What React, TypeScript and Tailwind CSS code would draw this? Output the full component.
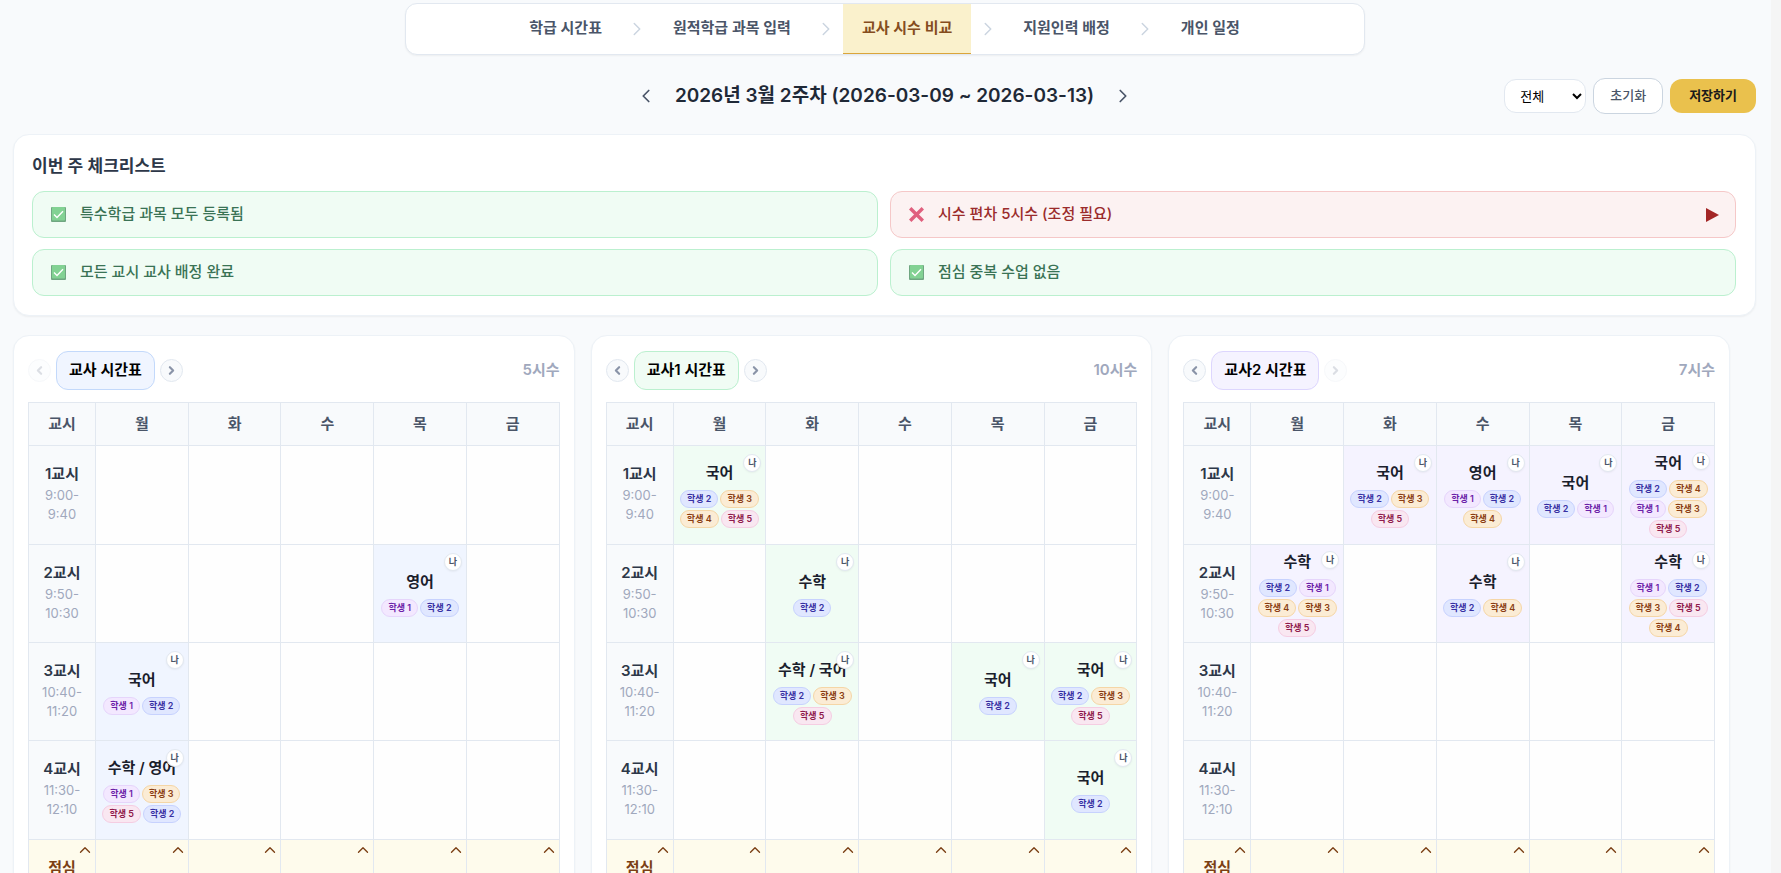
import { ChevronLeft, ChevronRight, ChevronUp } from "lucide-react";

type Lesson = { title: string; students: number[] };
type Teacher = {
    name: string;
    hours: number;
    tone: "blue" | "green" | "purple";
    lessons: Record<string, Lesson>;
};

const steps = ["학급 시간표", "원적학급 과목 입력", "교사 시수 비교", "지원인력 배정", "개인 일정"];
const days = ["월", "화", "수", "목", "금"];
const periods = [
    { label: "1교시", start: "9:00-", end: "9:40" },
    { label: "2교시", start: "9:50-", end: "10:30" },
    { label: "3교시", start: "10:40-", end: "11:20" },
    { label: "4교시", start: "11:30-", end: "12:10" },
];

const checks = [
    { text: "특수학급 과목 모두 등록됨", ok: true },
    { text: "시수 편차 5시수 (조정 필요)", ok: false },
    { text: "모든 교시 교사 배정 완료", ok: true },
    { text: "점심 중복 수업 없음", ok: true },
];

// lessons are keyed by "period-day"
const teachers: Teacher[] = [
    {
        name: "교사",
        hours: 5,
        tone: "blue",
        lessons: {
            "1-3": { title: "영어", students: [1, 2] },
            "2-0": { title: "국어", students: [1, 2] },
            "3-0": { title: "수학 / 영어", students: [1, 3, 5, 2] },
        },
    },
    {
        name: "교사1",
        hours: 10,
        tone: "green",
        lessons: {
            "0-0": { title: "국어", students: [2, 3, 4, 5] },
            "1-1": { title: "수학", students: [2] },
            "2-1": { title: "수학 / 국어", students: [2, 3, 5] },
            "2-3": { title: "국어", students: [2] },
            "2-4": { title: "국어", students: [2, 3, 5] },
            "3-4": { title: "국어", students: [2] },
        },
    },
    {
        name: "교사2",
        hours: 7,
        tone: "purple",
        lessons: {
            "0-1": { title: "국어", students: [2, 3, 5] },
            "0-2": { title: "영어", students: [1, 2, 4] },
            "0-3": { title: "국어", students: [2, 1] },
            "0-4": { title: "국어", students: [2, 4, 1, 3, 5] },
            "1-0": { title: "수학", students: [2, 1, 4, 3, 5] },
            "1-2": { title: "수학", students: [2, 4] },
            "1-4": { title: "수학", students: [1, 2, 3, 5, 4] },
        },
    },
];

const cellTone = { blue: "bg-[#f0f5ff]", green: "bg-[#f0fcf4]", purple: "bg-[#f5f3ff]" };
const nameTone = {
    blue: "bg-[#f0f5ff] border-[#c3d9fb]",
    green: "bg-[#f0fcf4] border-[#bbf0cf]",
    purple: "bg-[#f5f3ff] border-[#ddd6fe]",
};

const chipTone: Record<number, string> = {
    1: "bg-[#f3e8ff] border-[#e6d5fb] text-[#6b21a8]",
    2: "bg-[#e0e7ff] border-[#c7d2fe] text-[#3730a3]",
    3: "bg-[#fbecd5] border-[#f5d6a6] text-[#8a3d12]",
    4: "bg-[#fbecd5] border-[#f5d6a6] text-[#8a3d12]",
    5: "bg-[#f9e7f1] border-[#f5cde2] text-[#8f1a4c]",
};

function CheckIcon() {
    return (
        <svg viewBox="0 0 15 15" className="w-[15px] h-[15px] shrink-0" aria-hidden="true">
            <rect width="15" height="15" rx="1" fill="#6fa681" />
            <rect x="1" y="0" width="13" height="13.6" rx="1" fill="#82d293" />
            <path d="M3 7.6 L6 10.6 L12 4.2" fill="none" stroke="#fff" strokeWidth="1.4" />
        </svg>
    );
}

function CrossIcon() {
    return (
        <svg viewBox="0 0 15 15" className="w-[15px] h-[15px] shrink-0" aria-hidden="true">
            <path d="M1.2 1.2 L13.8 13.8 M13.8 1.2 L1.2 13.8" fill="none" stroke="#e0607e" strokeWidth="3.4" />
        </svg>
    );
}

function Steps() {
    return (
        <nav className="flex justify-center w-full max-w-[960px] mx-auto bg-white border border-[#e2e8f0] rounded-xl shadow-xs">
            {steps.map((step, i) => (
                <div key={step} className="flex">
                    {i > 0 && (
                        <span className="flex items-center justify-center w-[33px] text-[#cbd5e0]">
                            <ChevronRight size={22} strokeWidth={1.6} />
                        </span>
                    )}
                    <a
                        href="#"
                        className={
                            i === 2
                                ? "h-[50px] px-[19px] pt-3 text-[15px] leading-6 font-semibold bg-[#faf1cc] text-[#854d1e] border-b border-[#dba53a]"
                                : "h-[50px] px-[19px] pt-3 text-[15px] leading-6 font-semibold text-[#4a5568]"
                        }
                    >
                        {step}
                    </a>
                </div>
            ))}
        </nav>
    );
}

function WeekBar() {
    return (
        <div className="grid grid-cols-[1fr_auto_1fr] items-center mt-[23px] text-[#4a5568]">
            <div />
            <div className="flex items-center gap-4">
                <button aria-label="이전 주" className="p-0.5">
                    <ChevronLeft size={22} strokeWidth={1.9} />
                </button>
                <h1 className="text-[19px] leading-7 font-semibold text-[#1f2937]">2026년 3월 2주차 (2026-03-09 ~ 2026-03-13)</h1>
                <button aria-label="다음 주" className="p-0.5">
                    <ChevronRight size={22} strokeWidth={1.9} />
                </button>
            </div>
            <div className="flex items-center justify-end gap-[7px]">
                <select aria-label="보기" className="w-[82px] h-[34px] px-[11px] text-[13px] text-black bg-white border border-[#e2e8f0] rounded-xl">
                    <option>전체</option>
                </select>
                <button className="h-9 px-4 text-[13px] font-medium bg-white border border-[#cbd5e0] rounded-xl">초기화</button>
                <button className="h-[34px] px-[19px] text-[13px] font-bold text-[#1a1a1a] bg-[#eac14d] rounded-xl">저장하기</button>
            </div>
        </div>
    );
}

function Checklist() {
    return (
        <section className="mt-5 pt-[19px] pb-[19px] pl-[18px] pr-[19px] bg-white border border-[#edf2f7] rounded-2xl shadow-xs">
            <h2 className="text-[17px] leading-6 font-semibold text-[#2d3748]">이번 주 체크리스트</h2>
            <ul className="grid grid-cols-2 gap-x-3 gap-y-[11px] mt-[13px]">
                {checks.map((c) => (
                    <li
                        key={c.text}
                        className={
                            c.ok
                                ? "flex items-center gap-3.5 h-[47px] pl-[18px] pr-4 border rounded-xl text-[15px] font-medium bg-[#f0fcf4] border-[#bbf0cf] text-[#3a7355]"
                                : "flex items-center gap-3.5 h-[47px] pl-[18px] pr-4 border rounded-xl text-[15px] font-medium bg-[#fcf2f2] border-[#f5c8c8] text-[#9b2c2c]"
                        }
                    >
                        {c.ok ? <CheckIcon /> : <CrossIcon />}
                        <span>{c.text}</span>
                        {!c.ok && (
                            <button aria-label="자세히" className="ml-auto">
                                <svg viewBox="0 0 13 14" className="w-[13px] h-3.5" fill="#a32626">
                                    <path d="M0 0 L13 7 L0 14 Z" />
                                </svg>
                            </button>
                        )}
                    </li>
                ))}
            </ul>
        </section>
    );
}

function LessonCell({ lesson }: { lesson: Lesson }) {
    return (
        <div className="relative flex flex-col items-center justify-center gap-1.5 min-h-[82px]">
            <strong className="text-[15px] leading-[22px] font-semibold whitespace-nowrap text-[#1a202c]">{lesson.title}</strong>
            <div className="flex flex-wrap justify-center gap-0.5 px-1">
                {lesson.students.map((s) => (
                    <span key={s} className={"h-[18px] px-1.5 border rounded-full text-[9px] leading-4 font-semibold whitespace-nowrap " + chipTone[s]}>
                        학생 {s}
                    </span>
                ))}
            </div>
            <span className="absolute top-0 right-1 w-[18px] h-[18px] bg-white border border-[#e2e8f0] rounded-full shadow-xs text-[9px] leading-4 text-center font-semibold text-[#4a5568]">
                나
            </span>
        </div>
    );
}

function ArrowButton({ dir, disabled }: { dir: "left" | "right"; disabled: boolean }) {
    const Icon = dir === "left" ? ChevronLeft : ChevronRight;
    return (
        <button
            aria-label={dir === "left" ? "이전 교사" : "다음 교사"}
            disabled={disabled}
            className="flex items-center justify-center w-[23px] h-[23px] rounded-full border border-[#e2e8f0] bg-[#f8fafc] text-[#8a94a8] disabled:opacity-30"
        >
            <Icon size={13} strokeWidth={4} />
        </button>
    );
}

function TeacherPanel({ teacher, index }: { teacher: Teacher; index: number }) {
    return (
        <section className="px-3.5 py-[15px] bg-white border border-[#edf2f7] rounded-2xl shadow-xs">
            <div className="flex items-center gap-[5px]">
                <ArrowButton dir="left" disabled={index === 0} />
                <button className={"h-[39px] px-3 border rounded-xl text-[15px] font-semibold text-black " + nameTone[teacher.tone]}>
                    {teacher.name} 시간표
                </button>
                <ArrowButton dir="right" disabled={index === teachers.length - 1} />
                <span className="ml-auto text-[15px] font-semibold text-[#a0a8bd]">{teacher.hours}시수</span>
            </div>

            <table className="w-full mt-3 table-fixed border-collapse text-center">
                <thead>
                    <tr className="h-[43px] bg-[#f8fafc] text-[15px] text-[#4a5568]">
                        <th className="w-[67px] border border-[#e2e8f0] font-semibold">교시</th>
                        {days.map((d) => (
                            <th key={d} className="border border-[#e2e8f0] font-semibold">{d}</th>
                        ))}
                    </tr>
                </thead>
                <tbody>
                    {periods.map((p, r) => (
                        <tr key={p.label} className={r === 1 || r === 2 ? "h-[98px]" : "h-[99px]"}>
                            <th className="pb-1 border border-[#e2e8f0] bg-[#f8fafc] font-normal">
                                <div className="text-[15px] leading-6 font-semibold text-[#2d3748]">{p.label}</div>
                                <div className="text-[13px] leading-[19px] text-[#a0a8bd]">
                                    {p.start}
                                    <br />
                                    {p.end}
                                </div>
                            </th>
                            {days.map((d, c) => {
                                const lesson = teacher.lessons[r + "-" + c];
                                return (
                                    <td key={d} className={"p-0 border border-[#e2e8f0] " + (lesson ? cellTone[teacher.tone] : "bg-[#fefefe]")}>
                                        {lesson && <LessonCell lesson={lesson} />}
                                    </td>
                                );
                            })}
                        </tr>
                    ))}
                    <tr className="h-[99px] bg-[#fefbec] text-[#7b3f14]">
                        <th className="relative pb-1 border border-[#e2e8f0] font-normal">
                            <ChevronUp size={18} strokeWidth={1.8} className="absolute top-px right-px" />
                            <div className="text-[15px] leading-6 font-semibold">점심</div>
                            <div className="text-[13px] leading-[19px]">
                                12:10-
                                <br />
                                13:00
                            </div>
                        </th>
                        {days.map((d) => (
                            <td key={d} className="relative border border-[#e2e8f0]">
                                <ChevronUp size={18} strokeWidth={1.8} className="absolute top-px right-px" />
                            </td>
                        ))}
                    </tr>
                </tbody>
            </table>
        </section>
    );
}

export default function App() {
    return (
        <div className="flex h-screen overflow-hidden bg-[#f8fafc] font-['Inter','Noto_Sans_CJK_KR',sans-serif]">
            <main className="flex-1 min-w-0 pt-[3px] pl-[13px] pr-[15px]">
                <Steps />
                <WeekBar />
                <Checklist />
                <div className="grid grid-cols-3 gap-4 mt-[19px] pr-[26px]">
                    {teachers.map((t, i) => (
                        <TeacherPanel key={t.name} teacher={t} index={i} />
                    ))}
                </div>
            </main>
            <div className="w-2.5 bg-[#f5f5f5]" />
        </div>
    );
}
